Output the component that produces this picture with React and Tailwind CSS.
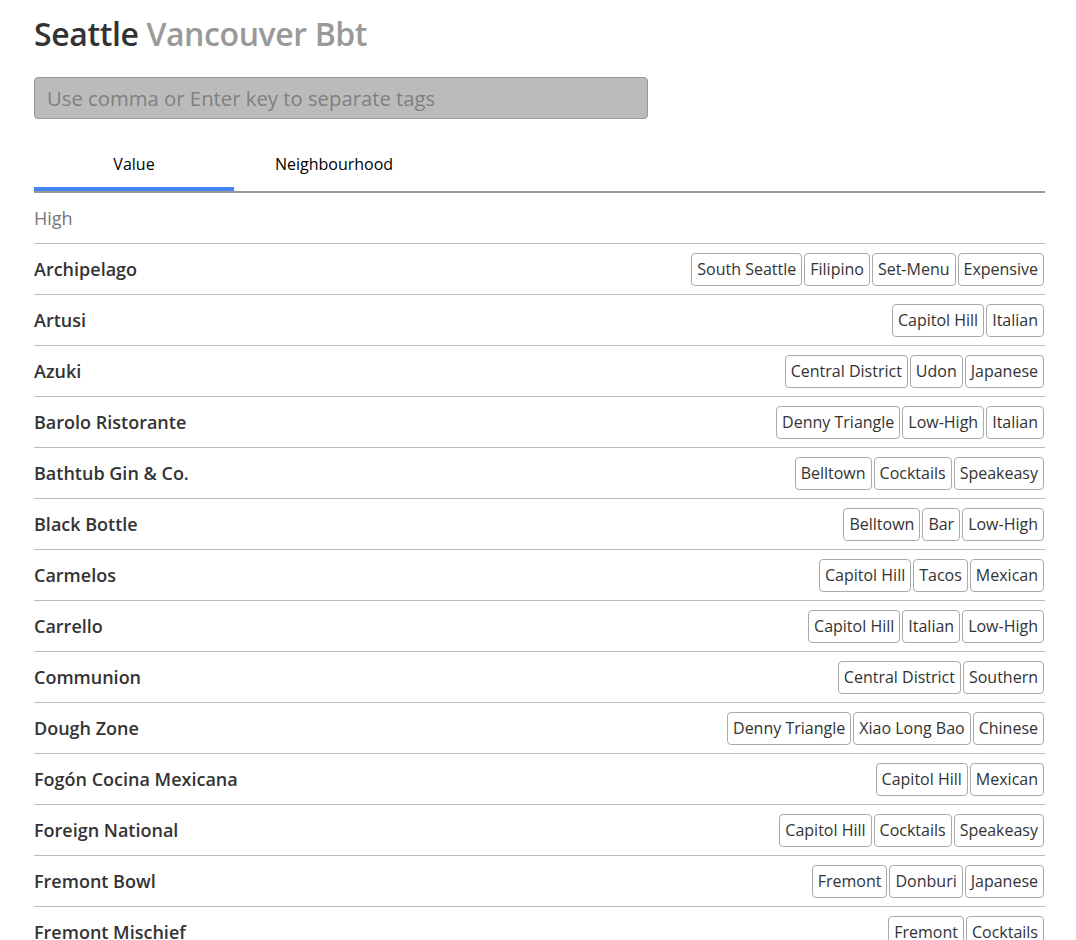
import React from "react";

const rows = [
  ["Archipelago", ["South Seattle", "Filipino", "Set-Menu", "Expensive"]],
  ["Artusi", ["Capitol Hill", "Italian"]],
  ["Azuki", ["Central District", "Udon", "Japanese"]],
  ["Barolo Ristorante", ["Denny Triangle", "Low-High", "Italian"]],
  ["Bathtub Gin & Co.", ["Belltown", "Cocktails", "Speakeasy"]],
  ["Black Bottle", ["Belltown", "Bar", "Low-High"]],
  ["Carmelos", ["Capitol Hill", "Tacos", "Mexican"]],
  ["Carrello", ["Capitol Hill", "Italian", "Low-High"]],
  ["Communion", ["Central District", "Southern"]],
  ["Dough Zone", ["Denny Triangle", "Xiao Long Bao", "Chinese"]],
  ["Fogón Cocina Mexicana", ["Capitol Hill", "Mexican"]],
  ["Foreign National", ["Capitol Hill", "Cocktails", "Speakeasy"]],
  ["Fremont Bowl", ["Fremont", "Donburi", "Japanese"]],
  ["Fremont Mischief", ["Fremont", "Cocktails"]],
];

export default function App() {
  return (
    <div
      className="bg-white w-[1076px] h-[940px] overflow-hidden text-[#333]"
      style={{ fontFamily: '"Open Sans", sans-serif' }}
    >
      <div className="ml-[34px] w-[1011px]">
        <h1 className="pt-[12px] text-[32px] leading-[44px] font-semibold tracking-[-0.4px]">
          <span className="text-[#333]">Seattle</span>{" "}
          <span className="text-[#999]">Vancouver Bbt</span>
        </h1>
        <div className="mt-[21px] w-[614px] h-[42px] rounded-[4px] border border-[#999] bg-[#bbb] flex items-center px-[12px]">
          <span className="text-[20.3px] text-[#808080]">Use comma or Enter key to separate tags</span>
        </div>
        <div className="mt-[22px] flex border-b-2 border-[#999]">
          <div className="w-[200px] h-[50px] flex flex-col">
            <div className="flex-1 flex items-center justify-center text-[16px] text-black">Value</div>
            <div className="h-[4px] bg-[#4285f4]" />
          </div>
          <div className="w-[200px] h-[50px] flex items-center justify-center text-[16px] text-black pb-[4px]">
            Neighbourhood
          </div>
        </div>
        <div className="h-[51px] border-b border-[#bbb] flex items-center text-[18px] text-[#777]">High</div>
        {rows.map(([name, tags]) => (
          <div key={name} className="h-[51px] border-b border-[#bbb] flex items-center justify-between">
            <span className="text-[18px] font-semibold text-[#333]">{name}</span>
            <div className="flex gap-[2px] pr-[1px]">
              {tags.map((t) => (
                <span
                  key={t}
                  className="h-[33px] px-[5px] flex items-center border border-[#aaa] rounded-[4px] text-[16px] text-[#333]"
                >
                  {t}
                </span>
              ))}
            </div>
          </div>
        ))}
      </div>
    </div>
  );
}
